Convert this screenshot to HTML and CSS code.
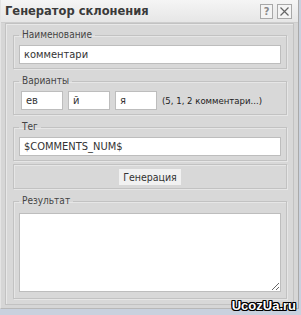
FILE: index.html
```html
<!DOCTYPE html>
<html lang="ru">
<head>
  <meta charset="UTF-8" />
  <title>Генератор склонения</title>
  <link rel="stylesheet" href="styles.css">
</head>
<body>
  <div class="window">
    <div class="titlebar">
      <span class="title">Генератор склонения</span>
      <span class="tools">
        <span class="tool">?</span>
        <span class="tool">
          <svg width="11" height="11" viewBox="0 0 11 11"><path d="M1.5 1.5 L9.5 9.5 M9.5 1.5 L1.5 9.5" stroke="#666" stroke-width="1.2" fill="none"/></svg>
        </span>
      </span>
    </div>

    <div class="panel">
      <fieldset class="name">
        <legend>Наименование</legend>
        <input type="text" class="wide" value="комментари" />
      </fieldset>

      <fieldset>
        <legend>Варианты</legend>
        <div class="row">
          <input type="text" class="small" value="ев" />
          <input type="text" class="small" value="й" />
          <input type="text" class="small" value="я" />
          <span class="hint">(5, 1, 2 комментари...)</span>
        </div>
      </fieldset>

      <fieldset class="tagset">
        <legend>Тег</legend>
        <input type="text" class="wide tag" value="$COMMENTS_NUM$" />
      </fieldset>

      <fieldset class="actions">
        <button type="button">Генерация</button>
      </fieldset>

      <fieldset class="result">
        <legend>Результат</legend>
        <textarea></textarea>
      </fieldset>
    </div>
  </div>
  <div class="watermark">UcozUa.ru</div>
</body>
</html>
```

FILE: styles.css
```css
body {
  margin: 0;
  width: 301px;
  height: 315px;
  overflow: hidden;
  background: #c9d1de;
  font-family: "DejaVu Sans", Verdana, sans-serif;
  font-stretch: condensed;
  position: relative;
}

.window {
  width: 299px;
  height: 309px;
  background: #d6d6d6;
  border-left: 1px solid #e4e4e4;
  border-right: 1px solid #a9a9a9;
  border-bottom: 1px solid #b8b8b8;
  box-sizing: border-box;
}

.titlebar {
  height: 23px;
  display: flex;
  align-items: center;
  justify-content: space-between;
  padding: 0 6px 0 4px;
  background: linear-gradient(#f5f5f5, #e6e6e6);
  border-bottom: 1px solid #cdcdcd;
  box-sizing: border-box;
}

.title {
  font-weight: bold;
  font-size: 11.5px;
  font-stretch: normal;
  color: #3a3a3a;
}

.tools {
  display: flex;
  gap: 4px;
}

.tool {
  width: 11px;
  height: 13px;
  border: 1px solid #a8a8a8;
  background: #f4f4f4;
  font-size: 11px;
  font-weight: bold;
  color: #8a8a8a;
  display: flex;
  align-items: center;
  justify-content: center;
}

.tool:last-child {
  width: 13px;
}

.panel {
  margin: 0 4px 0 4px;
  padding: 5px 6px 5px 7px;
  border: 1px solid #c2c2c2;
  box-shadow: inset 1px 1px 0 #e8e8e8;
  background: #d8d8d8;
}

fieldset {
  margin: 0 0 6px 0;
  padding: 4px 5px 4px 5px;
  border: 1px solid #c2c2c2;
  box-shadow: inset 1px 1px 0 #e6e6e6, 1px 1px 0 #e6e6e6;
}

legend {
  font-size: 10px;
  line-height: 12px;
  color: #444;
  padding: 0 3px;
}

input[type="text"] {
  height: 19px;
  box-sizing: border-box;
  border: 1px solid #bdbdbd;
  background: #fff;
  font-family: "DejaVu Sans", Verdana, sans-serif;
  font-stretch: condensed;
  font-size: 11px;
  color: #333;
  padding: 1px 4px;
}

.wide {
  width: 100%;
  display: block;
}

.tag {
  font-size: 12px;
}

.tagset {
  margin-bottom: 3px;
}

.row {
  display: flex;
  align-items: center;
  gap: 5px;
  padding: 0 0 0 2px;
}

.small {
  width: 42px;
}

.hint {
  font-size: 9.5px;
  color: #222;
}

.actions {
  display: flex;
  justify-content: center;
  padding: 4px 0 3px;
}

button {
  font-family: "DejaVu Sans", Verdana, sans-serif;
  font-stretch: condensed;
  font-size: 10.5px;
  color: #333;
  background: #f1f1f1;
  border: none;
  height: 16px;
  padding: 0 4px;
}

.result {
  margin-bottom: 0;
  padding: 6px 5px 6px 5px;
}

textarea {
  display: block;
  width: 100%;
  height: 79px;
  box-sizing: border-box;
  border: 1px solid #bdbdbd;
  background: #fff;
  resize: both;
}

.watermark {
  position: absolute;
  right: 5px;
  bottom: 3px;
  font-family: "Liberation Sans", Arial, sans-serif;
  font-weight: bold;
  font-size: 13px;
  line-height: 13px;
  color: #fff;
  text-shadow: -1px -1px 0 #000, 1px -1px 0 #000, -1px 1px 0 #000, 1px 1px 0 #000, 0 1px 0 #000, 0 -1px 0 #000, 1px 0 0 #000, -1px 0 0 #000;
}
```
